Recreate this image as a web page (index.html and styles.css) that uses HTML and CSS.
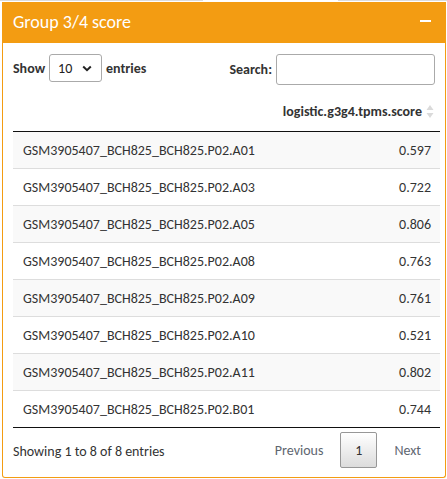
FILE: index.html
```html
<!DOCTYPE html>
<html>
<head>
<meta charset="utf-8">
<link rel="stylesheet" href="styles.css">
</head>
<body>
<div class="topstrip"><span class="seg seg-a"></span><span class="seg seg-b"></span></div>
<div class="box">
  <div class="box-header">
    <h3 class="box-title">Group 3/4 score</h3>
    <span class="collapse-btn"></span>
  </div>
  <div class="box-body">
    <div class="controls">
      <label class="length">Show
        <span class="select">10<svg class="chev" width="10" height="7" viewBox="0 0 10 7"><path d="M1.2 1.5 L5 5.2 L8.8 1.5" fill="none" stroke="#222" stroke-width="2"/></svg></span>
        entries</label>
      <label class="search">Search:<span class="input"></span></label>
    </div>
    <table class="dt">
      <thead>
        <tr><th></th><th class="num">logistic.g3g4.tpms.score<span class="sort"><svg width="8" height="15" viewBox="0 0 8 15"><path d="M4 1 L7.5 6 L0.5 6 Z" fill="#dadada"/><path d="M4 14 L7.5 9 L0.5 9 Z" fill="#dadada"/></svg></span></th></tr>
      </thead>
      <tbody>
        <tr class="odd"><td>GSM3905407_BCH825_BCH825.P02.A01</td><td class="num">0.597</td></tr>
        <tr><td>GSM3905407_BCH825_BCH825.P02.A03</td><td class="num">0.722</td></tr>
        <tr class="odd"><td>GSM3905407_BCH825_BCH825.P02.A05</td><td class="num">0.806</td></tr>
        <tr><td>GSM3905407_BCH825_BCH825.P02.A08</td><td class="num">0.763</td></tr>
        <tr class="odd"><td>GSM3905407_BCH825_BCH825.P02.A09</td><td class="num">0.761</td></tr>
        <tr><td>GSM3905407_BCH825_BCH825.P02.A10</td><td class="num">0.521</td></tr>
        <tr class="odd"><td>GSM3905407_BCH825_BCH825.P02.A11</td><td class="num">0.802</td></tr>
        <tr class="last"><td>GSM3905407_BCH825_BCH825.P02.B01</td><td class="num">0.744</td></tr>
      </tbody>
    </table>
    <div class="footer">
      <div class="info">Showing 1 to 8 of 8 entries</div>
      <div class="paginate">
        <span class="pg-link">Previous</span>
        <span class="pg-btn">1</span>
        <span class="pg-link">Next</span>
      </div>
    </div>
  </div>
</div>
</body>
</html>
```
FILE: styles.css
```css
html, body {
  margin: 0;
  padding: 0;
  background: #fff;
}
body {
  font-family: Carlito, Lato, sans-serif;
  font-size: 14px;
  color: #333;
}
.topstrip {
  height: 2px;
  position: relative;
}
.seg {
  display: block;
  height: 1px;
  background: #dcdcdc;
  position: absolute;
  top: 0;
}
.seg-a { left: 0; width: 203px; }
.seg-b { left: 338px; width: 109px; }
.box {
  margin-left: 2px;
  width: 444px;
  box-sizing: border-box;
  border: 1px solid #f39c12;
  border-top: none;
  border-radius: 0 0 3px 3px;
}
.box-header {
  background: #f39c12;
  height: 41px;
  margin: 0 -1px;
  padding: 0 15px 0 11px;
  display: flex;
  align-items: center;
  justify-content: space-between;
}
.box-title {
  margin: 0;
  font-size: 18px;
  font-weight: normal;
  color: #fff;
  line-height: 1;
  padding-bottom: 1px;
}
.collapse-btn {
  width: 11px;
  height: 2px;
  background: #fff;
  margin-bottom: 3px;
}
.box-body {
  padding: 10px 5px 9px 10px;
}
.controls {
  display: flex;
  justify-content: space-between;
  align-items: flex-start;
  height: 38px;
  padding-right: 5px;
}
.length {
  display: flex;
  align-items: center;
  gap: 4px;
  height: 28px;
  margin-top: 1px;
  font-weight: bold;
}
.select {
  box-sizing: border-box;
  width: 53px;
  height: 28px;
  border: 1px solid #aaa;
  border-radius: 3px;
  display: flex;
  align-items: center;
  justify-content: space-between;
  padding: 0 9px 0 8px;
  font-weight: normal;
  color: #222;
}
.chev { display: block; }
.search {
  display: flex;
  align-items: center;
  gap: 4px;
  height: 31px;
  margin-top: 1px;
  font-weight: bold;
}
.input {
  display: block;
  box-sizing: border-box;
  width: 159px;
  height: 31px;
  border: 1px solid #aaa;
  border-radius: 3px;
}
.dt {
  width: 427px;
  border-collapse: collapse;
  border-spacing: 0;
}
.dt th {
  height: 40px;
  padding: 0 0 0 10px;
  font-weight: bold;
  border-bottom: 1px solid #111;
  white-space: nowrap;
  vertical-align: middle;
}
.dt th.num { text-align: right; }
.sort {
  display: inline-block;
  vertical-align: middle;
  margin-left: 4px;
  margin-right: 6px;
  margin-top: -2px;
}
.sort svg { display: block; }
.dt td {
  height: 36px;
  padding: 0 10px;
  border-bottom: 1px solid #ddd;
  vertical-align: middle;
  white-space: nowrap;
}
.dt tr.odd td { background: #f9f9f9; }
.dt tr.last td { border-bottom: 1px solid #111; }
.dt td.num { text-align: right; padding-right: 9px; }
.footer {
  display: flex;
  justify-content: space-between;
  align-items: center;
  margin-top: 4px;
  padding-right: 2px;
}
.info { padding-top: 2px; }
.paginate {
  display: flex;
  align-items: center;
}
.pg-link {
  color: #5e6670;
  padding: 0 17px;
}
.pg-btn {
  box-sizing: border-box;
  width: 37px;
  height: 36px;
  border: 1px solid #979797;
  border-radius: 2px;
  background: linear-gradient(to bottom, #fff 0%, #dcdcdc 100%);
  display: flex;
  align-items: center;
  justify-content: center;
  color: #333;
}
```
